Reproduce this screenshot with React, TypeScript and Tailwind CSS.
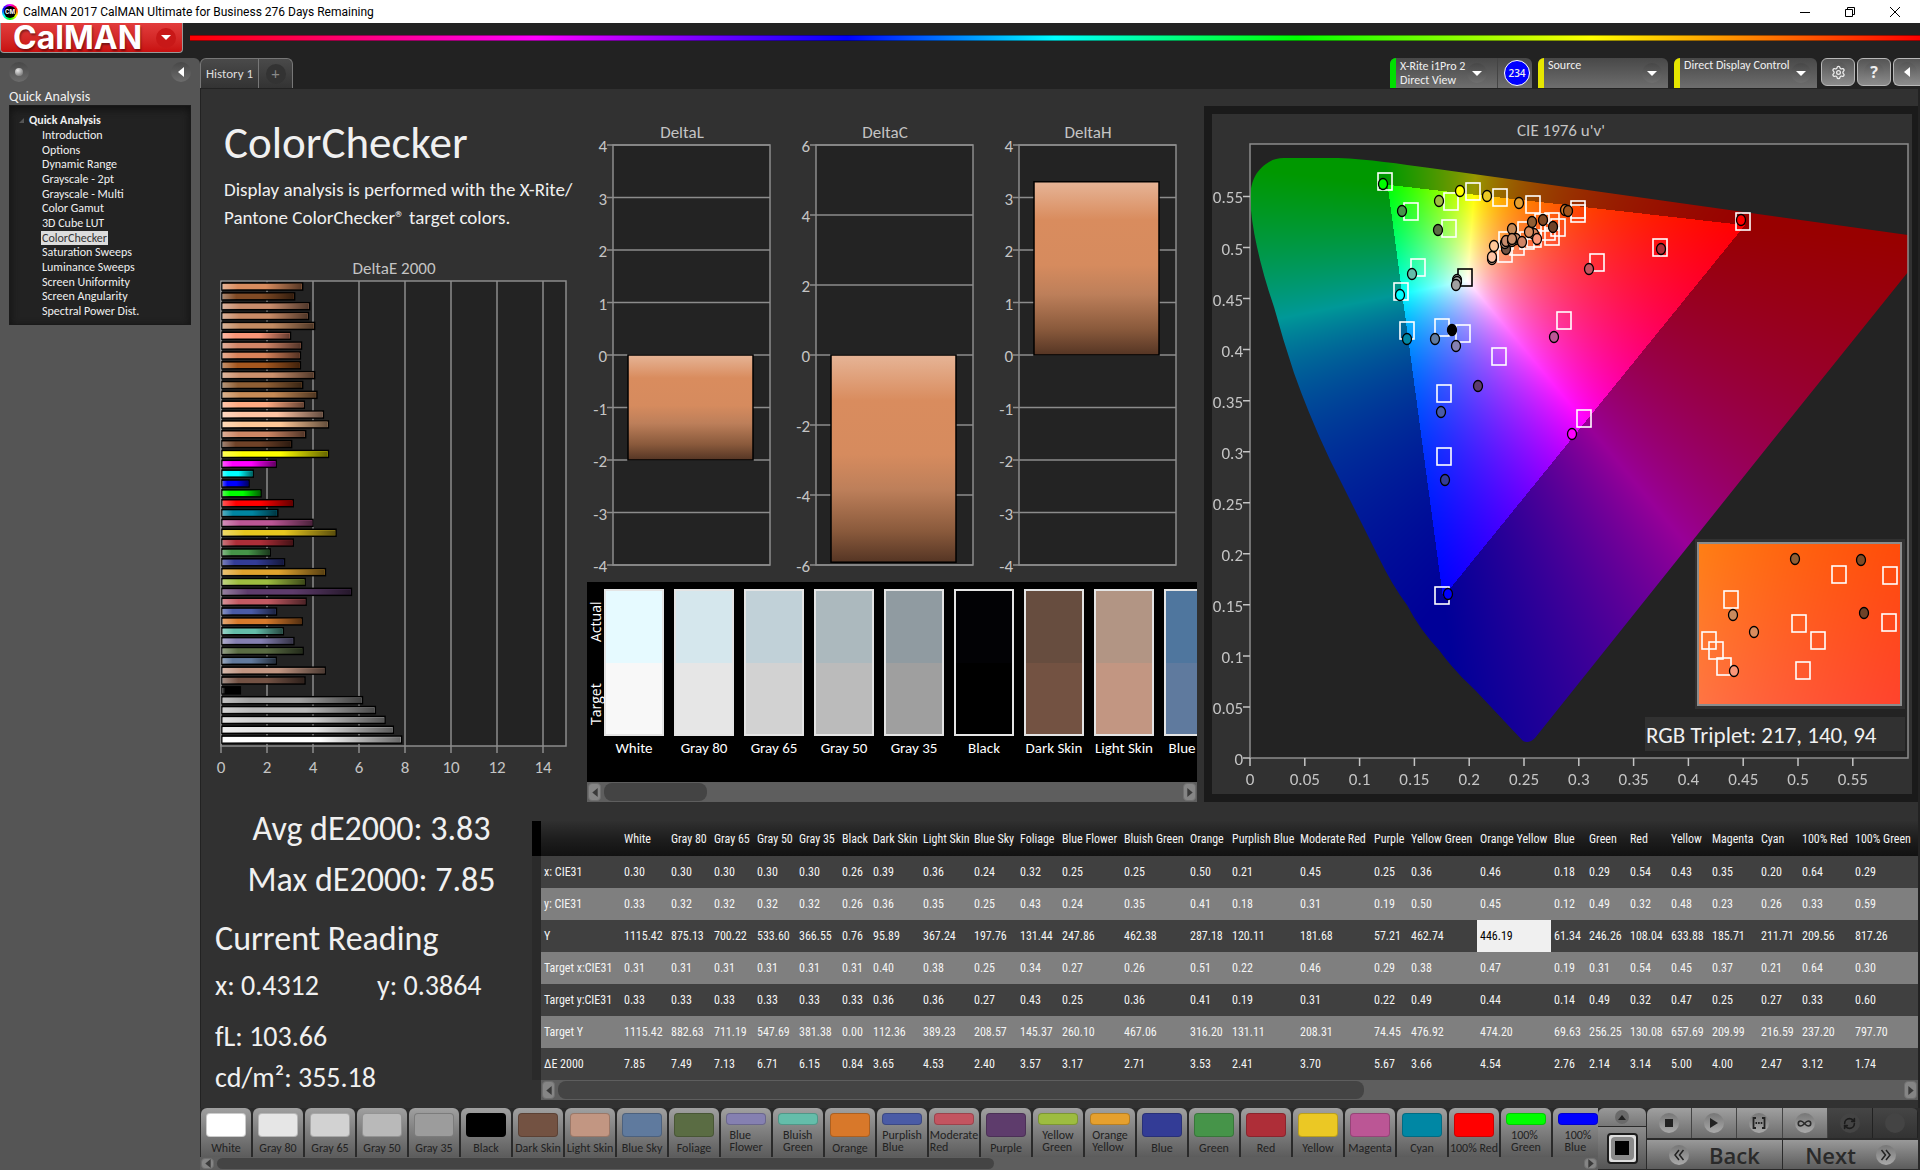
import React, { useEffect, useRef } from 'react';
import { Settings, Infinity as Loop, RefreshCw } from 'lucide-react';

interface Patch {
  name: string;
  lines?: string[];
  color: string;
}

interface Marker {
  x: number;
  y: number;
  color: string;
}

const treeItems = [
  'Introduction', 'Options', 'Dynamic Range', 'Grayscale - 2pt', 'Grayscale - Multi', 'Color Gamut', '3D Cube LUT',
  'ColorChecker', 'Saturation Sweeps', 'Luminance Sweeps', 'Screen Uniformity', 'Screen Angularity', 'Spectral Power Dist.',
];

const deltaE: [number, string][] = [
  [3.55, '#d98c5e'], [3.2, '#804a25'], [3.85, '#c88c6c'], [3.8, '#c88a66'], [4.07, '#c28a62'], [3.02, '#fa9678'],
  [3.5, '#d08466'], [3.45, '#d8825a'], [3.45, '#a4561e'], [4.07, '#cc906c'], [3.55, '#8f5e34'], [4.17, '#c68a56'],
  [3.62, '#ffaa82'], [4.45, '#ffc4a4'], [4.67, '#ffc898'], [3.68, '#cc8664'], [3.07, '#6f4228'], [4.67, '#ffff00'],
  [2.4, '#ff00ff'], [1.4, '#00ffff'], [1.22, '#0000ff'], [1.74, '#00ff00'], [3.14, '#ff0000'], [2.47, '#0085a1'],
  [4.0, '#bb5695'], [5.0, '#e7c71f'], [3.14, '#ae2e38'], [2.14, '#469449'], [2.76, '#333c96'], [4.54, '#e0a32e'],
  [3.66, '#9dbc40'], [5.67, '#5e3c6c'], [3.7, '#c35a63'], [2.41, '#4a5ba6'], [3.53, '#d67a2c'], [2.71, '#64bdaa'],
  [3.17, '#8580b1'], [3.57, '#5a6c43'], [2.4, '#627a9d'], [4.53, '#c29682'], [3.65, '#735244'], [0.84, '#000000'],
  [6.15, '#a0a0a0'], [6.71, '#bababa'], [7.13, '#d1d1d1'], [7.49, '#e6e6e6'], [7.85, '#ffffff'],
];

const swatches = [
  { name: 'White', actual: '#e6faff', target: '#f8f8f8' },
  { name: 'Gray 80', actual: '#d5e7ed', target: '#e6e6e6' },
  { name: 'Gray 65', actual: '#c1d1d8', target: '#d2d2d2' },
  { name: 'Gray 50', actual: '#acb9be', target: '#bbbbbb' },
  { name: 'Gray 35', actual: '#909ba1', target: '#9f9f9f' },
  { name: 'Black', actual: '#020205', target: '#000000' },
  { name: 'Dark Skin', actual: '#674d3f', target: '#735242' },
  { name: 'Light Skin', actual: '#b29584', target: '#c29682' },
  { name: 'Blue Sky', actual: '#4f769e', target: '#5f7a9e' },
];

const patches: Patch[] = [
  { name: 'White', color: '#ffffff' },
  { name: 'Gray 80', color: '#e6e6e6' },
  { name: 'Gray 65', color: '#d2d2d2' },
  { name: 'Gray 50', color: '#b9b9b9' },
  { name: 'Gray 35', color: '#9c9c9c' },
  { name: 'Black', color: '#000000' },
  { name: 'Dark Skin', color: '#735242' },
  { name: 'Light Skin', color: '#c29682' },
  { name: 'Blue Sky', color: '#5f7a9e' },
  { name: 'Foliage', color: '#5a6c43' },
  { name: 'Blue Flower', lines: ['Blue', 'Flower'], color: '#8580b1' },
  { name: 'Bluish Green', lines: ['Bluish', 'Green'], color: '#64bdaa' },
  { name: 'Orange', color: '#d8782a' },
  { name: 'Purplish Blue', lines: ['Purplish', 'Blue'], color: '#4a5ba6' },
  { name: 'Moderate Red', lines: ['Moderate', 'Red'], color: '#c35460' },
  { name: 'Purple', color: '#5e3c6c' },
  { name: 'Yellow Green', lines: ['Yellow', 'Green'], color: '#9dbc40' },
  { name: 'Orange Yellow', lines: ['Orange', 'Yellow'], color: '#e6a02e' },
  { name: 'Blue', color: '#333c96' },
  { name: 'Green', color: '#469449' },
  { name: 'Red', color: '#ae2e38' },
  { name: 'Yellow', color: '#ebc824' },
  { name: 'Magenta', color: '#bb5695' },
  { name: 'Cyan', color: '#0087a4' },
  { name: '100% Red', color: '#ff0000' },
  { name: '100% Green', lines: ['100%', 'Green'], color: '#00ff00' },
  { name: '100% Blue', lines: ['100%', 'Blue'], color: '#0000ff' },
];

const columns: [string, number][] = [
  ['White', 47], ['Gray 80', 43], ['Gray 65', 43], ['Gray 50', 42], ['Gray 35', 43], ['Black', 31], ['Dark Skin', 50],
  ['Light Skin', 51], ['Blue Sky', 46], ['Foliage', 42], ['Blue Flower', 62], ['Bluish Green', 66], ['Orange', 42],
  ['Purplish Blue', 68], ['Moderate Red', 74], ['Purple', 37], ['Yellow Green', 69], ['Orange Yellow', 74], ['Blue', 35],
  ['Green', 41], ['Red', 41], ['Yellow', 41], ['Magenta', 49], ['Cyan', 41], ['100% Red', 53], ['100% Green', 66],
];

const rows: [string, string][] = [
  ['x: CIE31', '0.30 0.30 0.30 0.30 0.30 0.26 0.39 0.36 0.24 0.32 0.25 0.25 0.50 0.21 0.45 0.25 0.36 0.46 0.18 0.29 0.54 0.43 0.35 0.20 0.64 0.29'],
  ['y: CIE31', '0.33 0.32 0.32 0.32 0.32 0.26 0.36 0.35 0.25 0.43 0.24 0.35 0.41 0.18 0.31 0.19 0.50 0.45 0.12 0.49 0.32 0.48 0.23 0.26 0.33 0.59'],
  ['Y', '1115.42 875.13 700.22 533.60 366.55 0.76 95.89 367.24 197.76 131.44 247.86 462.38 287.18 120.11 181.68 57.21 462.74 446.19 61.34 246.26 108.04 633.88 185.71 211.71 209.56 817.26'],
  ['Target x:CIE31', '0.31 0.31 0.31 0.31 0.31 0.31 0.40 0.38 0.25 0.34 0.27 0.26 0.51 0.22 0.46 0.29 0.38 0.47 0.19 0.31 0.54 0.45 0.37 0.21 0.64 0.30'],
  ['Target y:CIE31', '0.33 0.33 0.33 0.33 0.33 0.33 0.36 0.36 0.27 0.43 0.25 0.36 0.41 0.19 0.31 0.22 0.49 0.44 0.14 0.49 0.32 0.47 0.25 0.27 0.33 0.60'],
  ['Target Y', '1115.42 882.63 711.19 547.69 381.38 0.00 112.36 389.23 208.57 145.37 260.10 467.06 316.20 131.11 208.31 74.45 476.92 474.20 69.63 256.25 130.08 657.69 209.99 216.59 237.20 797.70'],
  ['ΔE 2000', '7.85 7.49 7.13 6.71 6.15 0.84 3.65 4.53 2.40 3.57 3.17 2.71 3.53 2.41 3.70 5.67 3.66 4.54 2.76 2.14 3.14 5.00 4.00 2.47 3.12 1.74'],
];

// centres of the target boxes on the CIE plot
const targets: [number, number][] = [
  [1385, 181], [1411, 211], [1451, 201], [1473, 191], [1500, 197], [1449, 228], [1533, 204], [1578, 209], [1578, 213],
  [1743, 221], [1660, 247], [1597, 262], [1418, 267], [1401, 291], [1407, 330], [1442, 327], [1463, 333], [1564, 320],
  [1499, 356], [1444, 393], [1584, 418], [1444, 456], [1442, 595], [1552, 221], [1558, 227], [1552, 236], [1505, 253],
  [1506, 240], [1517, 246], [1525, 230], [1527, 240], [1534, 238], [1542, 222], [1548, 231],
];

const readings: Marker[] = [
  { x: 1383, y: 184, color: '#00ff00' }, { x: 1402, y: 211, color: '#469449' }, { x: 1439, y: 201, color: '#9dbc40' },
  { x: 1460, y: 191, color: '#ffff00' }, { x: 1487, y: 196, color: '#ebc824' }, { x: 1438, y: 230, color: '#5a6c43' },
  { x: 1519, y: 203, color: '#e6a02e' }, { x: 1565, y: 210, color: '#d8782a' }, { x: 1568, y: 211, color: '#a4561e' },
  { x: 1741, y: 220, color: '#ff0000' }, { x: 1661, y: 249, color: '#ae2e38' }, { x: 1589, y: 269, color: '#c35460' },
  { x: 1412, y: 274, color: '#64bdaa' }, { x: 1400, y: 295, color: '#00ffff' }, { x: 1407, y: 339, color: '#0087a4' },
  { x: 1435, y: 339, color: '#5f7a9e' }, { x: 1452, y: 330, color: '#000000' }, { x: 1456, y: 346, color: '#8580b1' },
  { x: 1554, y: 337, color: '#bb5695' }, { x: 1478, y: 386, color: '#5e3c6c' }, { x: 1441, y: 412, color: '#4a5ba6' },
  { x: 1572, y: 434, color: '#ff00ff' }, { x: 1445, y: 480, color: '#333c96' }, { x: 1448, y: 594, color: '#0000ff' },
  { x: 1457, y: 280, color: '#bababa' }, { x: 1457, y: 282, color: '#a0a0a0' }, { x: 1456, y: 285, color: '#a0a0a0' },
  { x: 1506, y: 249, color: '#735242' }, { x: 1492, y: 259, color: '#ffc4a4' }, { x: 1492, y: 257, color: '#ffc4a4' },
  { x: 1494, y: 246, color: '#ffc898' }, { x: 1505, y: 243, color: '#c29682' }, { x: 1506, y: 241, color: '#c88c6c' },
  { x: 1516, y: 239, color: '#c88a66' }, { x: 1512, y: 241, color: '#cc8664' }, { x: 1512, y: 229, color: '#c68a56' },
  { x: 1512, y: 239, color: '#cc906c' }, { x: 1522, y: 242, color: '#d08466' }, { x: 1534, y: 234, color: '#d8825a' },
  { x: 1529, y: 232, color: '#d98c5e' }, { x: 1537, y: 239, color: '#fa9678' }, { x: 1532, y: 222, color: '#8f5e34' },
  { x: 1543, y: 220, color: '#804a25' }, { x: 1553, y: 227, color: '#6f4228' },
];

const insetTargets: [number, number][] = [
  [1839, 574], [1890, 575], [1731, 599], [1799, 623], [1818, 640], [1889, 622], [1709, 640], [1716, 650], [1724, 666], [1803, 670],
];

const insetReadings: Marker[] = [
  { x: 1795, y: 559, color: '#8f5e34' }, { x: 1861, y: 560, color: '#804a25' }, { x: 1864, y: 613, color: '#6f4228' },
  { x: 1733, y: 615, color: '#c88a5e' }, { x: 1754, y: 632, color: '#d98c5e' }, { x: 1734, y: 671, color: '#fa9678' },
];

const locus =
  'M1250 197C1251 184 1254 171 1269 162C1274 159 1278 158 1284 158L1338 158C1368 159 1400 164 1430 168L1908 235L1908 272L1773 440L1535 738Q1529 744 1523 741L1475 690Q1455 672 1439 650Q1420 630 1407 605Q1392 585 1379 558L1330 460Q1310 418 1294 373Q1283 340 1274 307Q1263 275 1257 247Q1251 220 1250 197Z';

// u'v' chromaticity to a fully bright display colour, dimmed outside of the Rec.709 triangle
function chromaToRgb(u: number, v: number): [number, number, number] {
  const d = 6 * u - 16 * v + 12;
  const x = (9 * u) / d;
  const y = Math.max((4 * v) / d, 0.0001);
  const X = x / y;
  const Z = (1 - x - y) / y;
  const raw = [
    3.2406 * X - 1.5372 - 0.4986 * Z,
    -0.9689 * X + 1.8758 + 0.0415 * Z,
    0.0557 * X - 0.204 + 1.057 * Z,
  ];
  const level = Math.min(...raw) < 0 ? 152 : 255;
  const rgb = raw.map((c) => Math.max(c, 0));
  const max = Math.max(...rgb);
  return [(rgb[0] / max) * level, (rgb[1] / max) * level, (rgb[2] / max) * level];
}

interface ChromaProps {
  width: number;
  height: number;
  u: [number, number];
  v: [number, number];
}

function ChromaCanvas({ width, height, u, v }: ChromaProps) {
  const ref = useRef<HTMLCanvasElement>(null);

  useEffect(() => {
    const ctx = ref.current?.getContext('2d');
    if (!ctx) return;
    const img = ctx.createImageData(width, height);
    for (let py = 0; py < height; py++) {
      for (let px = 0; px < width; px++) {
        const [r, g, b] = chromaToRgb(u[0] + ((u[1] - u[0]) * px) / width, v[1] - ((v[1] - v[0]) * py) / height);
        const i = (py * width + px) * 4;
        img.data[i] = r;
        img.data[i + 1] = g;
        img.data[i + 2] = b;
        img.data[i + 3] = 255;
      }
    }
    ctx.putImageData(img, 0, 0);
  }, [width, height, u, v]);

  return <canvas ref={ref} width={width} height={height} className="block" />;
}

const plotU: [number, number] = [0, 0.6];
const plotV: [number, number] = [0, 0.602];
const insetU: [number, number] = [0.25, 0.291];
const insetV: [number, number] = [0.503, 0.534];

const TargetBox = ({ x, y, stroke = '#ffffff' }: { x: number; y: number; stroke?: string }) => (
  <rect x={x - 7} y={y - 8} width="14" height="17" fill="none" stroke={stroke} strokeWidth="1.6" />
);

const Reading = ({ x, y, color }: Marker) => <ellipse cx={x} cy={y} rx="4.5" ry="5.5" fill={color} stroke="#000" strokeWidth="1.3" />;

function CieChart() {
  const xt = Array.from({ length: 12 }, (_, i) => i * 0.05);
  return (
    <svg viewBox="1212 114 700 680" className="block h-auto w-full" role="img" aria-label="CIE 1976 u'v'">
      <defs>
        <clipPath id="locus">
          <path d={locus} />
        </clipPath>
      </defs>
      <text x="1561" y="136" textAnchor="middle" className="fill-[#c4c4c4] text-[17px]">CIE 1976 u'v'</text>
      <rect x="1250" y="144" width="658" height="614" fill="#232323" />
      <g clipPath="url(#locus)">
        <foreignObject x="1250" y="144" width="658" height="614">
          <ChromaCanvas width={658} height={614} u={plotU} v={plotV} />
        </foreignObject>
      </g>
      <rect x="1250" y="144" width="658" height="614" fill="none" stroke="#8c8c8c" strokeWidth="1.5" />
      {xt.map((t) => {
        const label = String(Number(t.toFixed(2)));
        const x = 1250 + t * 1096;
        const y = 758 - t * 1021;
        return (
          <g key={label} className="fill-[#c4c4c4] text-[17px]">
            <path d={`M${x} 758v8M1250 ${y}h-7`} stroke="#c4c4c4" strokeWidth="1.5" />
            <text x={x} y="785" textAnchor="middle">{label}</text>
            <text x="1243" y={y + 7} textAnchor="end">{label}</text>
          </g>
        );
      })}
      {targets.map(([x, y], i) => <TargetBox key={i} x={x} y={y} />)}
      <TargetBox x={1465} y={277} stroke="#000" />
      {readings.map((m, i) => <Reading key={i} {...m} />)}

      <rect x="1695" y="539" width="210" height="170" fill="#313131" />
      <foreignObject x="1698" y="543" width="203" height="162">
        <ChromaCanvas width={203} height={162} u={insetU} v={insetV} />
      </foreignObject>
      <rect x="1698" y="543" width="203" height="162" fill="none" stroke="#8c8c8c" strokeWidth="2" />
      {insetTargets.map(([x, y], i) => <TargetBox key={i} x={x} y={y} />)}
      {insetReadings.map((m, i) => <Reading key={i} {...m} />)}

      <rect x="1645" y="717" width="260" height="34" fill="#313131" />
      <text x="1646" y="743" className="fill-[#f0f0f0] text-[23px]">RGB Triplet: 217, 140, 94</text>
    </svg>
  );
}

function DeltaEChart() {
  return (
    <svg viewBox="200 254 387 540" className="block h-auto w-full" role="img" aria-label="DeltaE 2000">
      <defs>
        <linearGradient id="shadeX">
          <stop offset="0" stopColor="#fff" stopOpacity=".35" />
          <stop offset=".2" stopColor="#fff" stopOpacity="0" />
          <stop offset=".2" stopColor="#000" stopOpacity="0" />
          <stop offset=".55" stopColor="#000" stopOpacity="0" />
          <stop offset="1" stopColor="#000" stopOpacity=".6" />
        </linearGradient>
      </defs>
      <text x="394" y="274" textAnchor="middle" className="fill-[#c4c4c4] text-[17px]">DeltaE 2000</text>
      <rect x="221" y="281" width="345" height="465" fill="#232323" />
      {[0, 2, 4, 6, 8, 10, 12, 14].map((t) => (
        <g key={t}>
          <path d={`M${221 + t * 23} 281v472`} stroke="#8c8c8c" strokeWidth="1.5" />
          <text x={221 + t * 23} y="773" textAnchor="middle" className="fill-[#c4c4c4] text-[17px]">{t}</text>
        </g>
      ))}
      <rect x="221" y="281" width="345" height="465" fill="none" stroke="#8c8c8c" strokeWidth="1.5" />
      {deltaE.map(([v, color], i) => (
        <g key={i}>
          <rect x="222" y={283 + i * 9.85} width={v * 23 - 1} height="7" fill={color} stroke="#000" strokeWidth="1.5" />
          <rect x="222" y={284 + i * 9.85} width={v * 23 - 2} height="5.5" fill="url(#shadeX)" />
        </g>
      ))}
    </svg>
  );
}

interface DeltaBarProps {
  title: string;
  left: number;
  max: number;
  step: number;
  value: number;
}

function DeltaBar({ title, left, max, step, value }: DeltaBarProps) {
  const ticks: number[] = [];
  for (let t = max; t >= -max; t -= step) ticks.push(t);
  const unit = 210 / max;
  const top = value > 0 ? 355 - value * unit : 355;
  return (
    <g className="fill-[#c4c4c4] text-[17px]">
      <text x={left + 69} y="138" textAnchor="middle">{title}</text>
      <rect x={left} y="145" width="157" height="420" fill="#232323" />
      {ticks.map((t) => (
        <g key={t}>
          <path d={`M${left - 6} ${355 - t * unit}h163`} stroke="#8c8c8c" strokeWidth="1.5" />
          <text x={left - 6} y={362 - t * unit} textAnchor="end">{t}</text>
        </g>
      ))}
      <rect x={left} y="145" width="157" height="420" fill="none" stroke="#8c8c8c" strokeWidth="1.5" />
      <rect x={left + 15} y={top} width="125" height={Math.abs(value) * unit} fill="url(#shadeY)" stroke="#000" strokeWidth="1.5" />
    </g>
  );
}

function DeltaCharts() {
  return (
    <svg viewBox="587 88 610 494" className="block h-auto w-full" role="img" aria-label="DeltaL, DeltaC and DeltaH">
      <defs>
        <linearGradient id="shadeY" x1="0" y1="0" x2="0" y2="1">
          <stop offset="0" stopColor="#e6b496" />
          <stop offset=".22" stopColor="#d98c5e" />
          <stop offset=".48" stopColor="#d68b5e" />
          <stop offset=".65" stopColor="#bd7f5a" />
          <stop offset=".85" stopColor="#8a5a3c" />
          <stop offset="1" stopColor="#553524" />
        </linearGradient>
      </defs>
      <DeltaBar title="DeltaL" left={613} max={4} step={1} value={-2} />
      <DeltaBar title="DeltaC" left={816} max={6} step={2} value={-5.92} />
      <DeltaBar title="DeltaH" left={1019} max={4} step={1} value={3.3} />
    </svg>
  );
}

function ScrollBar({ size, thumb }: { size: 'sm' | 'lg'; thumb: string }) {
  const arrow = 'flex w-[13px] shrink-0 items-center justify-center rounded-sm border border-[#6f6f6f] bg-[#858585]';
  return (
    <div className={`flex w-full gap-[3px] bg-[#5e5e5e] p-px ${size === 'sm' ? 'h-[13px]' : 'h-5'}`}>
      <button aria-label="Scroll left" className={arrow}>
        <svg viewBox="0 0 6 10" className="h-[9px] w-[6px]"><path d="M6 0v10L0 5z" fill="#3a3a3a" /></svg>
      </button>
      <div className="flex-1">
        <div className={`h-full rounded-lg bg-[#444] ${thumb}`} />
      </div>
      <button aria-label="Scroll right" className={arrow}>
        <svg viewBox="0 0 6 10" className="h-[9px] w-[6px]"><path d="M0 0v10l6-5z" fill="#3a3a3a" /></svg>
      </button>
    </div>
  );
}

const DownArrow = () => (
  <span className="flex size-5 shrink-0 items-center justify-center rounded-full bg-linear-to-b from-[#474747] to-[#6f6f6f]">
    <svg viewBox="0 0 10 5" className="h-[5px] w-[10px]"><path d="M0 0h10L5 5z" fill="#fff" /></svg>
  </span>
);

function TitleBar() {
  return (
    <div className="flex h-[23px] items-center bg-white pl-0.5 text-black">
      <span className="flex size-4 items-center justify-center rounded-full bg-[conic-gradient(#f0f,#f00,#ff0,#0f0,#0ff,#00f,#f0f)]">
        <span className="flex size-3 items-center justify-center rounded-full bg-black font-['Inter',sans-serif] text-[6px] font-bold text-white">CM</span>
      </span>
      <h1 className="ml-[5px] flex-1 font-['Roboto',sans-serif] text-xs">CalMAN 2017 CalMAN Ultimate for Business 276 Days Remaining</h1>
      <div className="flex h-full pr-0.5">
        <button aria-label="Minimize" className="flex w-[45px] items-center justify-center">
          <svg viewBox="0 0 10 10" className="size-2.5"><path d="M0 5.5h10" stroke="#000" /></svg>
        </button>
        <button aria-label="Restore" className="flex w-[45px] items-center justify-center">
          <svg viewBox="0 0 10 10" className="size-2.5" fill="none" stroke="#000"><path d="M.5 2.5h7v7h-7zM2.5 2.5v-2h7v7h-2" /></svg>
        </button>
        <button aria-label="Close" className="flex w-[46px] items-center justify-center">
          <svg viewBox="0 0 10 10" className="size-2.5"><path d="M0 0l10 10M10 0L0 10" stroke="#000" /></svg>
        </button>
      </div>
    </div>
  );
}

function Sidebar() {
  return (
    <aside className="w-[200px] shrink-0 rounded-tr-md bg-[#555] px-[9px] pt-1">
      <div className="flex justify-between">
        <button aria-label="Record" className="flex size-5 items-center justify-center rounded-full bg-linear-to-b from-[#484848] to-[#6c6c6c]">
          <span className="size-2 rounded-full bg-[radial-gradient(circle_at_35%_30%,#e8e8e8,#888_70%)]" />
        </button>
        <button aria-label="Collapse panel" className="flex size-5 items-center justify-center rounded-full bg-linear-to-b from-[#484848] to-[#6c6c6c]">
          <svg viewBox="0 0 6 10" className="h-[10px] w-[6px]"><path d="M6 0v10L0 5z" fill="#fff" /></svg>
        </button>
      </div>
      <h2 className="mt-[7px] text-[14px] leading-4">Quick Analysis</h2>
      <nav className="border border-[#1a1a1a] bg-[#222] pt-[7px] pb-1.5 pl-[9px] text-[12px] leading-[14px] text-[#f0f0f0] shadow-[inset_0_3px_8px_#111]">
        <div className="flex items-center gap-[5px] font-bold">
          <svg viewBox="0 0 5 5" className="size-[5px]"><path d="M5 0v5H0z" fill="#555" /></svg>
          Quick Analysis
        </div>
        <ul className="mt-px flex h-[190px] flex-col items-start justify-between pl-[22px]">
          {treeItems.map((item) => (
            <li key={item}>
              <a href="#" className={item === 'ColorChecker' ? 'block bg-[#dcdcdc] px-px text-[#333]' : 'block px-px'}>{item}</a>
            </li>
          ))}
        </ul>
      </nav>
    </aside>
  );
}

function TopBar() {
  const box = 'flex h-full items-stretch overflow-hidden rounded-t-md bg-linear-to-b from-[#484848] to-[#6e6e6e] text-left text-[12px] leading-[14px]';
  const square = 'flex h-7 shrink-0 items-center justify-center border border-[#b8b8b8] bg-linear-to-b from-[#555] to-[#8c8c8c]';
  const round = 'flex size-5 items-center justify-center rounded-full bg-linear-to-b from-[#555] to-[#888] text-[#eee]';
  return (
    <div className="flex h-[30px] bg-[#222]">
      <div role="tablist" className="flex overflow-hidden rounded-t-md border border-b-0 border-[#777] bg-linear-to-b from-[#4a4a4a] to-[#333]">
        <button role="tab" aria-selected="true" className="w-[58px] border-r border-[#777] text-[13px] text-[#ddd]">History 1</button>
        <button role="tab" aria-label="Add tab" className="flex w-[33px] items-center justify-center">
          <span className="flex size-5 items-center justify-center rounded-full bg-[#333] text-[#888]">+</span>
        </button>
      </div>
      <div className="ml-auto flex">
        <div className={`${box} w-[142px]`}>
          <button aria-haspopup="menu" className="flex flex-1 items-center pr-2.5">
            <span className="mr-1 h-full w-[6px] bg-[#00e000]" />
            <span className="mb-px flex-1 text-left whitespace-nowrap">X-Rite i1Pro 2<br />Direct View</span>
            <DownArrow />
          </button>
          <button aria-label="Meter 234" className="flex w-[35px] items-center justify-center border-l border-[#444] pl-1">
            <span className="flex size-[26px] items-center justify-center rounded-full border border-white bg-[#00f] font-['Open_Sans',sans-serif] text-[10px] font-semibold">234</span>
          </button>
        </div>
        <button aria-haspopup="menu" className={`${box} ml-1.5 w-[130px] pr-1.5`}>
          <span className="mr-1 w-[6px] bg-[#e6e600]" />
          <span className="flex-1">Source</span>
          <span className="self-center"><DownArrow /></span>
        </button>
        <button aria-haspopup="menu" className={`${box} ml-1.5 w-[143px] pr-1.5`}>
          <span className="mr-1 w-[6px] shrink-0 bg-[#e6e600]" />
          <span className="flex-1 whitespace-nowrap">Direct Display Control</span>
          <span className="self-center"><DownArrow /></span>
        </button>
        <div className="ml-1 flex gap-0.5">
          <button aria-label="Settings" className={`${square} w-[34px] rounded-md`}><span className={round}><Settings size={15} /></span></button>
          <button aria-label="Help" className={`${square} w-[34px] rounded-md`}><span className={`${round} font-['Open_Sans',sans-serif] text-base font-bold`}>?</span></button>
          <button aria-label="Expand" className={`${square} w-[27px] rounded-l-md border-r-0`}>
            <span className={round}><svg viewBox="0 0 6 10" className="h-[10px] w-[6px]"><path d="M6 0v10L0 5z" fill="#fff" /></svg></span>
          </button>
        </div>
      </div>
    </div>
  );
}

function SwatchStrip() {
  return (
    <div>
      <div className="flex h-[200px] overflow-hidden bg-black pt-[7px] text-white">
        <div className="flex w-[17px] shrink-0 flex-col font-['Open_Sans',sans-serif] text-sm leading-[17px]">
          <span className="flex h-[66px] rotate-180 items-center justify-center [writing-mode:vertical-rl]">Actual</span>
          <span className="mt-4 flex h-[66px] rotate-180 items-center justify-center [writing-mode:vertical-rl]">Target</span>
        </div>
        <div className="flex gap-2.5">
          {swatches.map((s) => (
            <div key={s.name} className="w-[60px] shrink-0 text-center text-[15px] leading-6 whitespace-nowrap">
              <div className="flex h-[147px] flex-col border-2 border-[#e4e4e4]">
                <div className="flex-1" style={{ backgroundColor: s.actual }} />
                <div className="flex-1" style={{ backgroundColor: s.target }} />
              </div>
              {s.name}
            </div>
          ))}
        </div>
      </div>
      <ScrollBar size="lg" thumb="w-[103px]" />
    </div>
  );
}

function ResultsTable() {
  return (
    <div className="min-w-0 flex-1 pt-[17px]">
      <table className="w-full table-fixed border-collapse text-left font-['Roboto_Condensed','Roboto',sans-serif] text-[12px] whitespace-nowrap text-[#f4f4f4]">
        <colgroup>
          <col style={{ width: 9 }} />
          <col style={{ width: 80 }} />
          {columns.map(([name, w]) => <col key={name} style={{ width: w }} />)}
        </colgroup>
        <thead>
          <tr className="h-[35px] bg-linear-to-b from-[#303030] via-[#1e1e1e] to-[#111]">
            <td className="bg-black" />
            <td />
            {columns.map(([name]) => <th key={name} scope="col" className="pl-[3px] font-normal">{name}</th>)}
          </tr>
        </thead>
        <tbody>
          {rows.map(([label, cells]) => (
            <tr key={label} className="h-8 bg-[#404040] even:bg-[#7f7f7f]">
              <td className="bg-[#2a2a2a]" />
              <th scope="row" className="pl-[3px] font-normal">{label}</th>
              {cells.split(' ').map((cell, i) => (
                <td key={i} className={cell === '446.19' ? 'bg-[#f0f0f0] pl-[3px] text-black' : 'pl-[3px]'}>{cell}</td>
              ))}
            </tr>
          ))}
        </tbody>
      </table>
      <div className="ml-[9px]"><ScrollBar size="lg" thumb="w-3/5" /></div>
    </div>
  );
}

function Stats() {
  return (
    <section className="flex w-[332px] shrink-0 flex-col pl-[15px] text-[34px] whitespace-nowrap text-[#f0f0f0]">
      <p className="h-[50px] pr-1 text-center leading-[50px]">Avg dE2000: 3.83</p>
      <p className="h-[52px] pr-1 text-center leading-[52px]">Max dE2000: 7.85</p>
      <h2 className="leading-[66px]">Current Reading</h2>
      <div className="flex text-[28px] leading-7">
        <p className="w-[162px]">x: 0.4312</p>
        <p>y: 0.3864</p>
      </div>
      <p className="mt-4 text-[28px] leading-[42px]">fL: 103.66</p>
      <p className="text-[28px] leading-10">cd/m²: 355.18</p>
    </section>
  );
}

function PatchBar() {
  return (
    <div className="min-w-0 flex-1">
      <div className="flex h-[49px] gap-0.5 overflow-hidden pl-px">
        {patches.map((p) => (
          <button key={p.name} className="flex w-[50px] shrink-0 flex-col items-center rounded-t-md bg-linear-to-b from-[#a0a0a0] to-[#5c5c5c] pt-[5px] text-[12px] leading-3 whitespace-nowrap text-[#222]">
            <span
              className={`w-10 shrink-0 rounded border border-black/20 ${p.lines ? 'mb-1 h-3' : 'mb-[5px] h-6'}`}
              style={{ backgroundColor: p.color }}
            />
            {p.lines ? <span className="text-left">{p.lines[0]}<br />{p.lines[1]}</span> : p.name}
          </button>
        ))}
      </div>
      <ScrollBar size="sm" thumb="w-[57%]" />
    </div>
  );
}

function Transport() {
  const key = 'flex flex-1 items-center justify-center border-r border-[#444] bg-linear-to-b from-[#a0a0a0] to-[#6c6c6c]';
  const darkKey = 'flex flex-1 items-center justify-center border-r border-[#222] bg-linear-to-b from-[#454545] to-[#333]';
  const disc = 'flex size-5 items-center justify-center rounded-full bg-linear-to-b from-[#777] to-[#aaa] text-[#2a2a2a]';
  const darkDisc = 'flex size-5 items-center justify-center rounded-full bg-[#444] text-[#1c1c1c]';
  const nav = 'flex flex-1 items-center justify-center gap-5 bg-linear-to-b from-[#999] to-[#5c5c5c] font-[\'Open_Sans\',sans-serif] text-[22px] leading-7 font-semibold text-[#2a2a2a]';
  return (
    <div className="flex w-[322px] shrink-0 gap-px pr-0.5 pb-px">
      <div className="flex w-12 flex-col gap-px">
        <button aria-label="Expand patches" className="flex h-[18px] items-center justify-center rounded-t-md bg-linear-to-b from-[#999] to-[#777]">
          <span className="flex size-[14px] items-center justify-center rounded-full bg-[#6a6a6a]">
            <svg viewBox="0 0 8 5" className="h-[5px] w-[8px]"><path d="M0 5h8L4 0z" fill="#222" /></svg>
          </span>
        </button>
        <button aria-label="Stop pattern" className="flex flex-1 items-center justify-center bg-linear-to-b from-[#8c8c8c] to-[#555]">
          <span className="flex size-[31px] items-center justify-center rounded border-2 border-[#1c1c1c] bg-[#ddd] p-0.5">
            <span className="flex size-full items-center justify-center rounded-sm bg-[#8a8a8a]"><span className="size-[14px] bg-black" /></span>
          </span>
        </button>
      </div>
      <div className="flex flex-1 flex-col gap-0.5">
        <div className="flex h-[30px] overflow-hidden rounded-t-md">
          <button aria-label="Stop" className={key}><span className={disc}><span className="size-2 bg-[#222]" /></span></button>
          <button aria-label="Play" className={key}><span className={disc}><svg viewBox="0 0 8 10" className="h-[10px] w-[8px]"><path d="M0 0v10l8-5z" fill="#222" /></svg></span></button>
          <button aria-label="Read series" className={key}>
            <span className={disc}>
              <svg viewBox="0 0 14 12" className="h-3 w-[14px]" fill="none" stroke="#222" strokeWidth="1.8"><path d="M4 1H1.5v10H4M10 1h2.5v10H10" /><path d="M3.5 6h7" strokeDasharray="1.6 1" /></svg>
            </span>
          </button>
          <button aria-label="Continuous" className={key}><span className={disc}><Loop size={15} strokeWidth={2.5} /></span></button>
          <button aria-label="Refresh" className={darkKey}><span className={darkDisc}><RefreshCw size={13} strokeWidth={3} /></span></button>
          <button aria-label="Unavailable" className={darkKey}><span className={darkDisc} /></button>
        </div>
        <div className="flex flex-1 gap-px">
          <button className={nav}>
            <span className={disc}><svg viewBox="0 0 12 12" className="size-3" fill="none" stroke="#222" strokeWidth="1.5"><path d="M6 1L2 6l4 5M10.5 1l-4 5 4 5" /></svg></span>
            Back
          </button>
          <button className={nav}>
            Next
            <span className={disc}><svg viewBox="0 0 12 12" className="size-3" fill="none" stroke="#222" strokeWidth="1.5"><path d="M1.5 1l4 5-4 5M6 1l4 5-4 5" /></svg></span>
          </button>
        </div>
      </div>
    </div>
  );
}

export default function App() {
  return (
    <div className="flex min-h-screen flex-col overflow-hidden bg-[#222] font-['Carlito','Calibri','Lato',sans-serif] text-[#f0f0f0]">
      <TitleBar />
      <div className="flex h-[35px] items-start gap-[7px]">
        <button className="flex h-[30px] w-[183px] items-center justify-between rounded-b border border-t-0 border-[#999] bg-linear-to-b from-[#e23c3c] to-[#c80f0f] pr-1.5 pl-3">
          <span className="font-['Inter',sans-serif] text-[32px] leading-7 font-bold text-white [text-shadow:1px_2px_2px_#0006]">CalMAN</span>
          <span className="flex size-5 items-center justify-center rounded-full bg-[#c81818]">
            <svg viewBox="0 0 10 5" className="h-[5px] w-[10px]"><path d="M0 0h10L5 5z" fill="#fff" /></svg>
          </span>
        </button>
        <div className="mt-3 h-1.5 flex-1 border-y border-black/40 bg-[linear-gradient(90deg,#f00,#f0f_20%,#00f_38%,#0ff_50%,#0f0_64%,#ff0_81%,#f00)]" />
      </div>
      <div className="flex flex-1">
        <Sidebar />
        <div className="flex min-w-0 flex-1 flex-col">
          <TopBar />
          <main className="mr-0.5 flex-1 bg-[#313131] shadow-[inset_1px_1px_#222]">
            <div className="grid grid-cols-[387fr_610fr_721fr] items-start">
              <section className="min-w-0">
                <div className="h-[166px] pt-[22px] pl-6">
                  <h2 className="text-[45px] leading-[66px]">ColorChecker</h2>
                  <p className="text-[19px] leading-7 whitespace-nowrap">
                    Display analysis is performed with the X-Rite/<br />Pantone ColorChecker® target colors.
                  </p>
                </div>
                <DeltaEChart />
              </section>
              <section className="min-w-0">
                <DeltaCharts />
                <SwatchStrip />
              </section>
              <section className="mt-[18px] ml-[7px] min-w-0 border-8 border-r-[6px] border-[#1a1a1a]">
                <CieChart />
              </section>
            </div>
            <div className="flex pt-0.5">
              <Stats />
              <ResultsTable />
            </div>
          </main>
          <footer className="flex h-[62px] bg-[#2a2a2a]">
            <PatchBar />
            <Transport />
          </footer>
        </div>
      </div>
    </div>
  );
}
